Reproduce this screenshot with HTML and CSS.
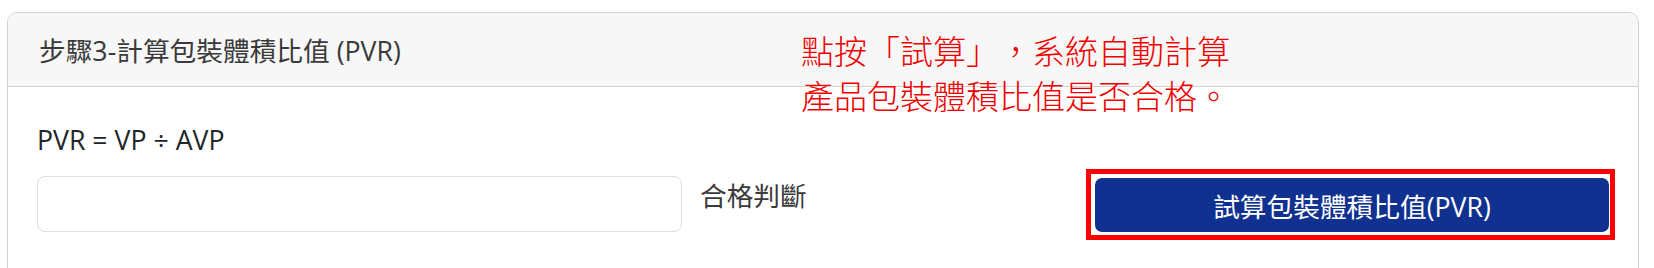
FILE: index.html
```
<!DOCTYPE html>
<html lang="zh-Hant">
<head>
  <meta charset="UTF-8" />
  <meta name="viewport" content="width=device-width, initial-scale=1.0" />
  <title>步驟3-計算包裝體積比值</title>
  <link rel="stylesheet" href="styles.css">
</head>
<body>
  <div class="card">
    <div class="card-header">步驟3-計算包裝體積比值 (PVR)</div>
    <div class="card-body">
      <p class="formula">PVR = VP ÷ AVP</p>
      <div class="calc-row">
        <input type="text" class="result-input" id="pvrResult">
        <span class="result-label">合格判斷</span>
        <div class="mark">
          <button class="calc-btn" id="calcBtn">試算包裝體積比值(PVR)</button>
        </div>
      </div>
    </div>
    <div class="note">點按「試算」，系統自動計算<br>產品包裝體積比值是否合格。</div>
  </div>
</body>
</html>
```

FILE: styles.css
```
html, body {
  margin: 0;
  padding: 0;
  background: #ffffff;
  font-family: "Open Sans", "Noto Sans CJK TC", sans-serif;
  font-size: 26.7px;
  color: #212529;
  text-spacing-trim: space-all;
}

.card {
  position: relative;
  box-sizing: border-box;
  width: 1632px;
  margin: 12px 0 0 7px;
  border: 1px solid #d2d2d2;
  border-radius: 10px;
  background: #ffffff;
}

.card-header {
  display: flex;
  align-items: center;
  height: 73px;
  padding: 0 31px;
  background: #f7f7f7;
  border-bottom: 1px solid #d2d2d2;
  border-radius: 10px 10px 0 0;
  color: #3a3a3a;
}

.card-body {
  padding: 34px 29px 60px;
}

.formula {
  margin: 0;
  line-height: 38px;
}

.calc-row {
  display: flex;
  align-items: flex-start;
  margin-top: 17px;
}

.result-input {
  box-sizing: border-box;
  width: 645px;
  height: 56px;
  margin: 0;
  border: 1px solid #dedede;
  border-radius: 8px;
  font: inherit;
  padding: 0 16px;
}

.result-label {
  flex: 1;
  margin: 1px 0 0 18px;
  line-height: 38px;
  color: #3a3a3a;
}

.mark {
  position: relative;
  margin-top: 2px;
}

.mark::after {
  content: "";
  position: absolute;
  left: -9px;
  top: -9px;
  right: -6px;
  bottom: -8px;
  border: 5px solid #ff0000;
  pointer-events: none;
}

.calc-btn {
  display: block;
  width: 514px;
  height: 54px;
  border: none;
  border-radius: 7px;
  background: #10318f;
  color: #ffffff;
  font: inherit;
  cursor: pointer;
}

.note {
  position: absolute;
  left: 793px;
  top: 15px;
  font-family: "Noto Sans CJK TC", sans-serif;
  font-size: 33px;
  font-weight: 300;
  line-height: 45px;
  color: #f00000;
  text-spacing-trim: space-all;
}
```
